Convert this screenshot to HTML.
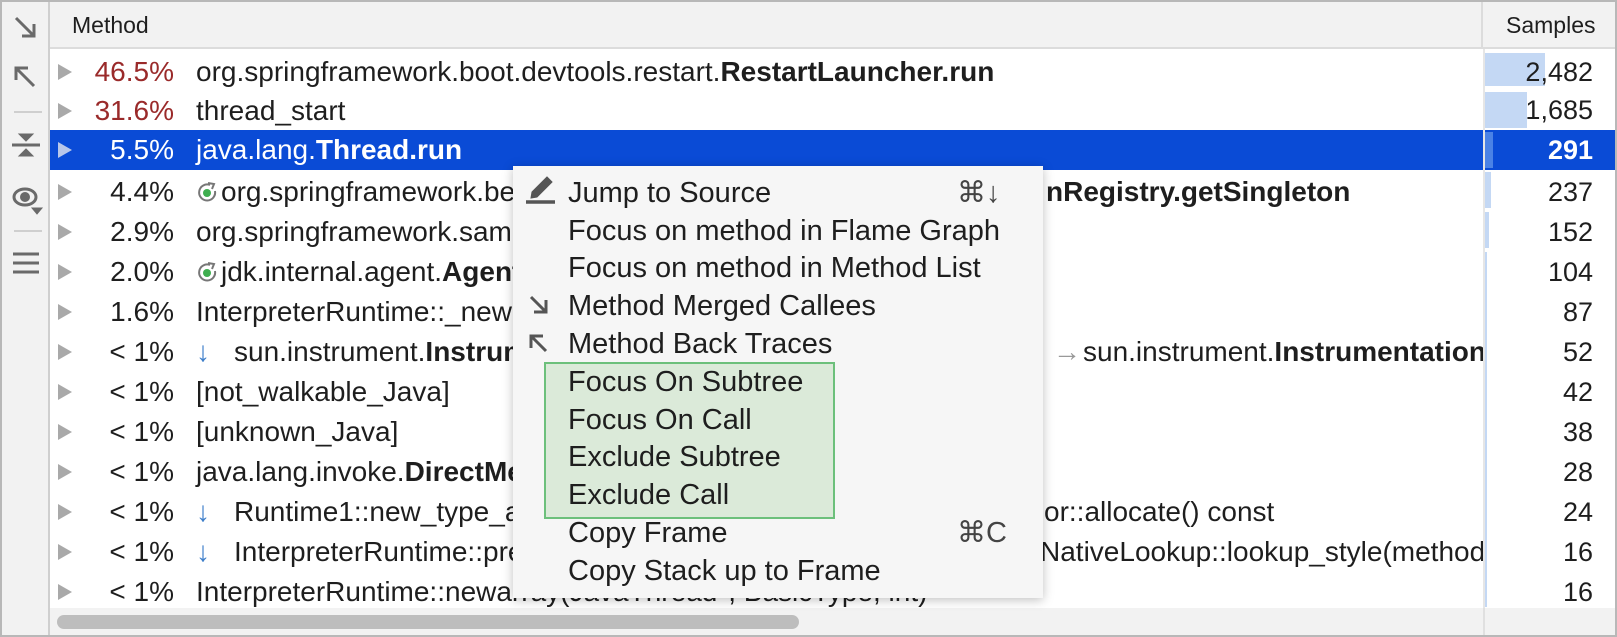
<!DOCTYPE html>
<html><head><meta charset="utf-8"><style>
*{margin:0;padding:0;box-sizing:border-box}
body{width:1617px;height:637px;overflow:hidden;background:#fff;font-family:"Liberation Sans",sans-serif;color:#1e1e1e;position:relative}
.abs{position:absolute}
#frame{left:0;top:0;width:1617px;height:637px;border:2px solid #b8b8b8}
#tool{left:2px;top:2px;width:48px;height:633px;background:#f2f2f2;border-right:2px solid #cfcfcf}
#head{left:50px;top:2px;width:1565px;height:47px;background:#f2f2f2;border-bottom:2px solid #dcdcdc;font-size:23px}
.row{position:absolute;left:50px;width:1433px;height:40px;font-size:28px;line-height:40px;white-space:nowrap;overflow:hidden}
.tri{position:absolute;left:8px;top:12px;width:0;height:0;border-left:14px solid #a9a9a9;border-top:8px solid transparent;border-bottom:8px solid transparent}
.pct{position:absolute;right:1309px;width:140px;text-align:right}
.txt{position:absolute;left:146px}
.rt{position:absolute}
.red{color:#9a2a2a}
b{font-weight:bold}
.samp{position:absolute;left:1485px;width:130px;height:40px;font-size:27px;line-height:40px;text-align:right;padding-right:22px}
.bar{position:absolute;left:1485px;background:#c4d8f4}
.arr{color:#3f7fca;position:absolute;left:146px}
.menu{left:513px;top:166px;width:530px;height:432px;background:#f6f6f6;box-shadow:0 2px 10px rgba(0,0,0,.25);font-size:29px}
.mi{position:absolute;left:55px;line-height:38px;height:38px;white-space:nowrap}
.sc{position:absolute;left:444px;line-height:38px;color:#444}
.ic{position:absolute;left:146px;top:9px}
</style></head><body>
<div id="frame" class="abs"></div>
<div id="tool" class="abs">
<svg width="48" height="280" style="position:absolute;left:0;top:0" fill="none" stroke="#6a6a6a" stroke-width="3">
<path d="M14 16 L32 34 M32 22 V34 H20"/>
<path d="M32 84 L14 66 M14 78 V66 H26"/>
<line x1="12" y1="110" x2="40" y2="110" stroke="#cfcfcf" stroke-width="2"/>
<path d="M10 143 H38" /><path d="M17 132 L24 139 L31 132 Z M17 154 L24 147 L31 154 Z" fill="#6a6a6a" stroke-width="1"/>
<ellipse cx="23" cy="195" rx="11" ry="8"/><circle cx="23" cy="195" r="3.5" fill="#6a6a6a"/>
<path d="M30 206 L40 206 L35 212 Z" fill="#6a6a6a" stroke-width="1"/>
<line x1="12" y1="229" x2="40" y2="229" stroke="#cfcfcf" stroke-width="2"/>
<path d="M11 252 H37 M11 261 H37 M11 270 H37"/>
</svg></div>
<div id="head" class="abs"><span class="abs" style="left:22px;top:10px">Method</span>
<div class="abs" style="left:1431px;top:0;width:2px;height:47px;background:#dcdcdc"></div>
<span class="abs" style="left:1456px;top:10px">Samples</span></div>
<div class="abs" style="left:1483px;top:49px;width:2px;height:560px;background:#e6e6e6"></div>

<div class="row" style="top:52px"><i class="tri"></i><span class="pct red">46.5%</span><span class="txt">org.springframework.boot.devtools.restart.<b>RestartLauncher.run</b></span></div>
<div class="row" style="top:91px"><i class="tri"></i><span class="pct red">31.6%</span><span class="txt">thread_start</span></div>
<div class="row" style="top:130px;background:#0a4bd6;color:#fff"><i class="tri" style="border-left-color:#b8c7ea"></i><span class="pct">5.5%</span><span class="txt">java.lang.<b>Thread.run</b></span></div>
<div class="row" style="top:172px"><i class="tri"></i><span class="pct">4.4%</span>
<svg class="ic" width="22" height="22" viewBox="0 0 22 22"><path d="M14 4 A8 8 0 1 0 19 10" fill="none" stroke="#777" stroke-width="2"/><path d="M12 2 L18 3 L16 8" fill="none" stroke="#777" stroke-width="2"/><circle cx="11" cy="12" r="4" fill="#3fae4f"/></svg>
<span class="txt" style="left:171px">org.springframework.be</span><span class="rt" style="left:996px"><b>nRegistry.getSingleton</b></span></div>
<div class="row" style="top:212px"><i class="tri"></i><span class="pct">2.9%</span><span class="txt">org.springframework.samp</span></div>
<div class="row" style="top:252px"><i class="tri"></i><span class="pct">2.0%</span>
<svg class="ic" width="22" height="22" viewBox="0 0 22 22"><path d="M14 4 A8 8 0 1 0 19 10" fill="none" stroke="#777" stroke-width="2"/><path d="M12 2 L18 3 L16 8" fill="none" stroke="#777" stroke-width="2"/><circle cx="11" cy="12" r="4" fill="#3fae4f"/></svg>
<span class="txt" style="left:171px">jdk.internal.agent.<b>Agent</b></span></div>
<div class="row" style="top:292px"><i class="tri"></i><span class="pct">1.6%</span><span class="txt">InterpreterRuntime::_new(</span></div>
<div class="row" style="top:332px"><i class="tri"></i><span class="pct">&lt; 1%</span><span class="arr">↓</span><span class="txt" style="left:184px">sun.instrument.<b>Instrum</b></span><span class="rt" style="left:1003px;color:#999">→</span><span class="rt" style="left:1033px">sun.instrument.<b>Instrumentation</b></span></div>
<div class="row" style="top:372px"><i class="tri"></i><span class="pct">&lt; 1%</span><span class="txt">[not_walkable_Java]</span></div>
<div class="row" style="top:412px"><i class="tri"></i><span class="pct">&lt; 1%</span><span class="txt">[unknown_Java]</span></div>
<div class="row" style="top:452px"><i class="tri"></i><span class="pct">&lt; 1%</span><span class="txt">java.lang.invoke.<b>DirectMe</b></span></div>
<div class="row" style="top:492px"><i class="tri"></i><span class="pct">&lt; 1%</span><span class="arr">↓</span><span class="txt" style="left:184px">Runtime1::new_type_arr</span><span class="rt" style="left:994px">or::allocate() const</span></div>
<div class="row" style="top:532px"><i class="tri"></i><span class="pct">&lt; 1%</span><span class="arr">↓</span><span class="txt" style="left:184px">InterpreterRuntime::pre</span><span class="rt" style="left:990px">NativeLookup::lookup_style(methodH</span></div>
<div class="row" style="top:572px"><i class="tri"></i><span class="pct">&lt; 1%</span><span class="txt">InterpreterRuntime::newarray(JavaThread*, BasicType, int)</span></div>

<div class="abs" style="left:1485px;top:130px;width:130px;height:40px;background:#0a4bd6"></div>
<div class="bar" style="top:53px;width:60px;height:33px"></div>
<div class="bar" style="top:92px;width:42px;height:36px"></div>
<div class="bar" style="top:132px;width:8px;height:36px;background:#4a82e6"></div>
<div class="bar" style="top:172px;width:6px;height:36px"></div>
<div class="bar" style="top:212px;width:4px;height:36px"></div>
<div class="bar" style="top:252px;width:2px;height:355px;background:#c4d8f4"></div>
<div class="samp" style="top:52px">2,482</div>
<div class="samp" style="top:90px">1,685</div>
<div class="samp" style="top:130px;color:#fff;font-weight:bold">291</div>
<div class="samp" style="top:172px">237</div>
<div class="samp" style="top:212px">152</div>
<div class="samp" style="top:252px">104</div>
<div class="samp" style="top:292px">87</div>
<div class="samp" style="top:332px">52</div>
<div class="samp" style="top:372px">42</div>
<div class="samp" style="top:412px">38</div>
<div class="samp" style="top:452px">28</div>
<div class="samp" style="top:492px">24</div>
<div class="samp" style="top:532px">16</div>
<div class="samp" style="top:572px">16</div>

<div class="abs" style="left:50px;top:608px;width:1565px;height:27px;background:#f2f2f2"></div>
<div class="abs" style="left:1483px;top:608px;width:2px;height:27px;background:#e0e0e0"></div>
<div class="abs" style="left:57px;top:615px;width:742px;height:14px;border-radius:7px;background:#bdbdbd"></div>

<div class="menu abs">
<svg class="abs" style="left:0;top:0" width="60" height="200" fill="none" stroke="#555" stroke-width="3">
<path d="M19 26 L34 11 L39 16 L24 31 L18 32 Z" fill="#555" stroke-width="1"/><path d="M13 36 H42" stroke-width="3.5"/>
<path d="M18 131 L33 146 M33 134 V146 H21"/>
<path d="M33 185 L18 170 M18 182 V170 H30"/>
</svg>
<div class="abs" style="left:31px;top:196px;width:291px;height:157px;background:#dbead9;border:2px solid #6cc07b"></div>
<div class="mi" style="top:8px">Jump to Source</div><div class="sc" style="top:8px">⌘↓</div>
<div class="mi" style="top:46px">Focus on method in Flame Graph</div>
<div class="mi" style="top:83px">Focus on method in Method List</div>
<div class="mi" style="top:121px">Method Merged Callees</div>
<div class="mi" style="top:159px">Method Back Traces</div>
<div class="mi" style="top:197px">Focus On Subtree</div>
<div class="mi" style="top:235px">Focus On Call</div>
<div class="mi" style="top:272px">Exclude Subtree</div>
<div class="mi" style="top:310px">Exclude Call</div>
<div class="mi" style="top:348px">Copy Frame</div><div class="sc" style="top:348px">⌘C</div>
<div class="mi" style="top:386px">Copy Stack up to Frame</div>
</div>
</body></html>
